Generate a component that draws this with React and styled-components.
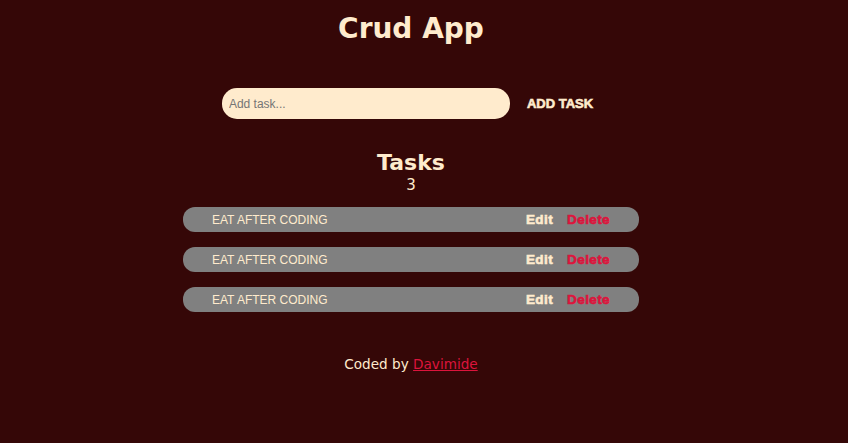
import React from "react";
import styled, { createGlobalStyle } from "styled-components";

const Global = createGlobalStyle`
  html, body { margin: 0; padding: 0; background: #350707; }
  body { font-family: "DejaVu Sans", Verdana, sans-serif; color: #ffebcd; }
`;

const Page = styled.div`
  min-height: 443px;
  padding: 0 26px 0 0;
  display: flex;
  flex-direction: column;
  align-items: center;
`;

const Title = styled.h1`
  margin: 12px 0 0;
  font-size: 28px;
  font-weight: bold;
  line-height: 34px;
`;

const Form = styled.div`
  display: flex;
  align-items: center;
  gap: 17px;
  margin: 42px 7px 0 0;
`;

const Input = styled.input`
  width: 288px;
  height: 31px;
  box-sizing: border-box;
  border: none;
  border-radius: 15px;
  background: #ffebcd;
  padding: 0 7px;
  font-family: "Liberation Sans", Arial, sans-serif;
  font-size: 12px;
  color: #333;
  outline: none;
  &::placeholder { color: #757575; }
`;

const AddButton = styled.button`
  background: none;
  border: none;
  padding: 0;
  color: #ffebcd;
  font-family: "Liberation Sans", Arial, sans-serif;
  font-weight: bold;
  font-size: 13px;
  -webkit-text-stroke: 0.6px #ffebcd;
  cursor: pointer;
`;

const Heading = styled.h2`
  margin: 31px 0 0;
  font-size: 22px;
  line-height: 26px;
  font-weight: bold;
`;

const Count = styled.div`
  font-size: 15px;
  line-height: 18px;
`;

const List = styled.div`
  margin-top: 13px;
  display: flex;
  flex-direction: column;
  gap: 15px;
`;

const Row = styled.div`
  width: 456px;
  height: 25px;
  box-sizing: border-box;
  background: #808080;
  border-radius: 12px;
  padding: 0 29px;
  display: flex;
  align-items: center;
  font-family: "Liberation Sans", Arial, sans-serif;
`;

const TaskText = styled.span`
  flex: 1;
  font-size: 12px;
  color: #ffebcd;
  padding-top: 1px;
`;

const Action = styled.button`
  background: none;
  border: none;
  padding: 0;
  margin-left: ${(p) => (p.$first ? 0 : "14px")};
  font-family: "Liberation Sans", Arial, sans-serif;
  font-weight: bold;
  font-size: 13.5px;
  letter-spacing: 0.4px;
  color: ${(p) => p.$color};
  -webkit-text-stroke: 0.6px ${(p) => p.$color};
  cursor: pointer;
`;

const Footer = styled.div`
  margin-top: 44px;
  font-size: 13.6px;
`;

const Link = styled.a`
  color: #dc143c;
  text-decoration: underline;
`;

const tasks = ["EAT AFTER CODING", "EAT AFTER CODING", "EAT AFTER CODING"];

export default function App() {
  return (
    <>
      <Global />
      <Page>
        <Title>Crud App</Title>
        <Form>
          <Input placeholder="Add task..." />
          <AddButton>ADD TASK</AddButton>
        </Form>
        <Heading>Tasks</Heading>
        <Count>{tasks.length}</Count>
        <List>
          {tasks.map((t, i) => (
            <Row key={i}>
              <TaskText>{t}</TaskText>
              <Action $first $color="#ffebcd">Edit</Action>
              <Action $color="#dc143c">Delete</Action>
            </Row>
          ))}
        </List>
        <Footer>
          Coded by <Link href="#">Davimide</Link>
        </Footer>
      </Page>
    </>
  );
}
